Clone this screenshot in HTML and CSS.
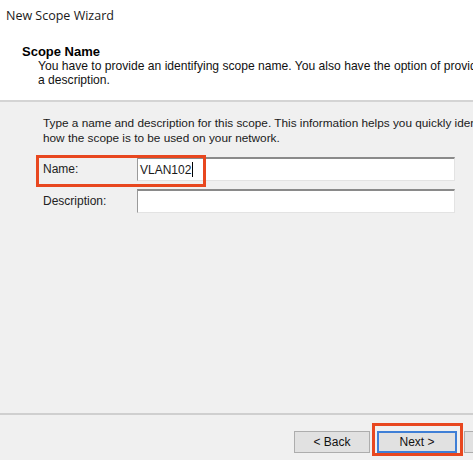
FILE: index.html
```html
<!DOCTYPE html>
<html>
<head>
<meta charset="utf-8">
<link rel="stylesheet" href="styles.css">
</head>
<body>
<div class="wizard">
  <div class="header">
    <div class="title">New Scope Wizard</div>
    <div class="heading">Scope Name</div>
    <div class="subtitle">You have to provide an identifying scope name. You also have the option of providing<br>a description.</div>
  </div>
  <div class="content">
    <p class="intro">Type a name and description for this scope. This information helps you quickly identify<br>how the scope is to be used on your network.</p>
    <div class="row row-name">
      <span class="label">Name:</span>
      <div class="input"><span class="value">VLAN102</span><span class="caret"></span></div>
      <div class="mark mark-name"></div>
    </div>
    <div class="row">
      <span class="label">Description:</span>
      <div class="input"></div>
    </div>
  </div>
  <div class="footer">
    <button class="btn">&lt; Back</button>
    <div class="next-wrap">
      <button class="btn btn-default">Next &gt;</button>
      <div class="mark mark-next"></div>
    </div>
    <button class="btn">Cancel</button>
  </div>
</div>
</body>
</html>
```
FILE: styles.css
```css
html, body {
  margin: 0;
  padding: 0;
  background: #f0f0f0;
}
.wizard {
  width: 473px;
  height: 460px;
  overflow: hidden;
  display: flex;
  flex-direction: column;
  font-family: "Liberation Sans", Arial, sans-serif;
  font-size: 12px;
  color: #000;
}
.header {
  background: #fff;
  height: 102px;
  box-sizing: border-box;
  padding: 7px 0 0 6px;
  border-bottom: 2px solid #d4d4d4;
  white-space: nowrap;
  overflow: hidden;
  flex: none;
}
.title {
  font-family: "Open Sans", "Noto Sans", sans-serif;
  font-size: 12.5px;
  line-height: 17px;
  color: #1a1a1a;
}
.heading {
  font-weight: bold;
  font-size: 13px;
  margin: 21px 0 0 16px;
  line-height: 14px;
}
.subtitle {
  margin-left: 32px;
  font-size: 12.1px;
  line-height: 14px;
  color: #111;
}
.content {
  flex: 1;
  padding: 14px 0 0 43px;
  position: relative;
  white-space: nowrap;
  overflow: hidden;
  color: #1a1a1a;
}
.intro {
  margin: 0 0 11px 0;
  font-size: 11.8px;
  line-height: 15px;
}
.row {
  display: flex;
  align-items: center;
  height: 24px;
  margin-bottom: 8px;
  position: relative;
}
.label {
  width: 94px;
  color: #222;
}
.input {
  width: 318px;
  height: 24px;
  box-sizing: border-box;
  background: #fff;
  border-top: 2px solid #8a8a8a;
  border-left: 1px solid #9a9a9a;
  border-right: 1px solid #e3e3e3;
  border-bottom: 1px solid #e3e3e3;
  display: flex;
  align-items: center;
  padding-left: 2px;
  font-size: 12px;
}
.caret {
  display: inline-block;
  width: 1px;
  height: 15px;
  background: #000;
  margin-left: 1px;
}
.mark {
  position: absolute;
  border: 3px solid #e8471f;
  box-sizing: border-box;
  pointer-events: none;
}
.mark-name {
  left: -7px;
  top: -2px;
  width: 170px;
  height: 32px;
}
.footer {
  height: 47px;
  flex: none;
  border-top: 2px solid #cfcfcf;
  display: flex;
  align-items: flex-start;
  padding: 16px 0 0 294px;
  gap: 7px;
  box-sizing: border-box;
  white-space: nowrap;
}
.btn {
  font-family: "Liberation Sans", Arial, sans-serif;
  font-size: 12px;
  width: 76px;
  height: 22px;
  padding: 0;
  background: #e1e1e1;
  border: 1px solid #adadad;
  color: #111;
  flex: none;
}
.btn-default {
  width: 80px;
  border: 2px solid #3f7fd6;
}
.next-wrap {
  position: relative;
  flex: none;
  display: flex;
}
.mark-next {
  left: -5px;
  top: -8px;
  width: 91px;
  height: 33px;
}
```
